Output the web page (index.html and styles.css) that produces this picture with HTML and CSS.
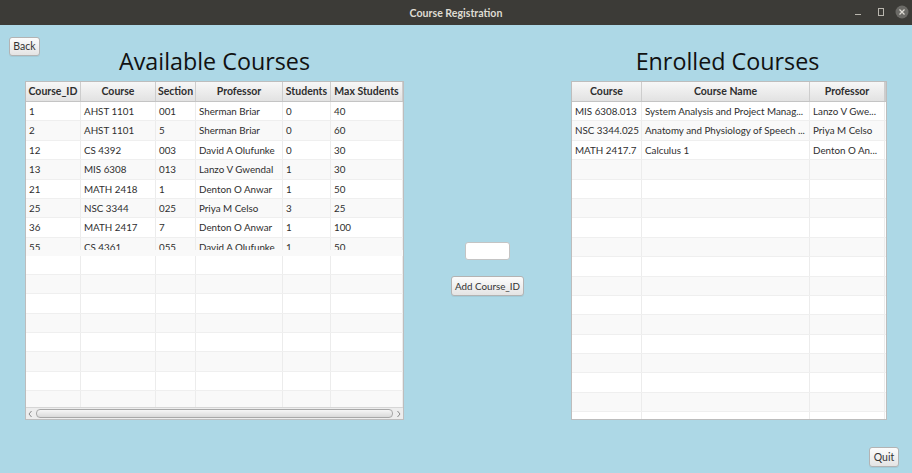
FILE: index.html
```html
<!DOCTYPE html>
<html>
<head>
<meta charset="utf-8">
<title>Course Registration</title>
<link rel="stylesheet" href="styles.css">
</head>
<body>
<header class="titlebar">
  <span></span>
  <span class="title">Course Registration</span>
  <div class="winctl">
    <svg width="60" height="25" viewBox="0 0 60 25">
      <line x1="5" y1="14.5" x2="11" y2="14.5" stroke="#b9b6ae" stroke-width="1"/>
      <rect x="28.5" y="8.5" width="5" height="7" fill="none" stroke="#b9b6ae" stroke-width="1"/>
      <circle cx="52" cy="12" r="6.5" fill="#6b6a66"/>
      <path d="M49.5 9.5 L54.5 14.5 M54.5 9.5 L49.5 14.5" stroke="#e0ddd6" stroke-width="1.2"/>
    </svg>
  </div>
</header>
<main class="app">
  <button class="btn back">Back</button>
  <h1 class="heading h-left">Available Courses</h1>
  <h1 class="heading h-right">Enrolled Courses</h1>

  <section class="tbl avail">
    <div class="row hdr">
      <div class="c">Course_ID</div><div class="c">Course</div><div class="c">Section</div><div class="c">Professor</div><div class="c">Students</div><div class="c">Max Students</div>
    </div>
    <div class="body">
      <div class="clip">
        <div class="row"><div class="c">1</div><div class="c">AHST 1101</div><div class="c">001</div><div class="c">Sherman Briar</div><div class="c">0</div><div class="c">40</div></div>
        <div class="row alt"><div class="c">2</div><div class="c">AHST 1101</div><div class="c">5</div><div class="c">Sherman Briar</div><div class="c">0</div><div class="c">60</div></div>
        <div class="row"><div class="c">12</div><div class="c">CS 4392</div><div class="c">003</div><div class="c">David A Olufunke</div><div class="c">0</div><div class="c">30</div></div>
        <div class="row alt"><div class="c">13</div><div class="c">MIS 6308</div><div class="c">013</div><div class="c">Lanzo V Gwendal</div><div class="c">1</div><div class="c">30</div></div>
        <div class="row"><div class="c">21</div><div class="c">MATH 2418</div><div class="c">1</div><div class="c">Denton O Anwar</div><div class="c">1</div><div class="c">50</div></div>
        <div class="row alt"><div class="c">25</div><div class="c">NSC 3344</div><div class="c">025</div><div class="c">Priya M Celso</div><div class="c">3</div><div class="c">25</div></div>
        <div class="row"><div class="c">36</div><div class="c">MATH 2417</div><div class="c">7</div><div class="c">Denton O Anwar</div><div class="c">1</div><div class="c">100</div></div>
        <div class="row alt cut"><div class="c">55</div><div class="c">CS 4361</div><div class="c">055</div><div class="c">David A Olufunke</div><div class="c">1</div><div class="c">50</div></div>
      </div>
      <div class="row"><div class="c"></div><div class="c"></div><div class="c"></div><div class="c"></div><div class="c"></div><div class="c"></div></div>
      <div class="row alt"><div class="c"></div><div class="c"></div><div class="c"></div><div class="c"></div><div class="c"></div><div class="c"></div></div>
      <div class="row"><div class="c"></div><div class="c"></div><div class="c"></div><div class="c"></div><div class="c"></div><div class="c"></div></div>
      <div class="row alt"><div class="c"></div><div class="c"></div><div class="c"></div><div class="c"></div><div class="c"></div><div class="c"></div></div>
      <div class="row"><div class="c"></div><div class="c"></div><div class="c"></div><div class="c"></div><div class="c"></div><div class="c"></div></div>
      <div class="row alt"><div class="c"></div><div class="c"></div><div class="c"></div><div class="c"></div><div class="c"></div><div class="c"></div></div>
      <div class="row"><div class="c"></div><div class="c"></div><div class="c"></div><div class="c"></div><div class="c"></div><div class="c"></div></div>
      <div class="row alt"><div class="c"></div><div class="c"></div><div class="c"></div><div class="c"></div><div class="c"></div><div class="c"></div></div>
    </div>
    <div class="hscroll">
      <svg class="arrow" width="9" height="12" viewBox="0 0 9 12"><polyline points="5.5,3 3,6 5.5,9" fill="none" stroke="#8a8a8a" stroke-width="1"/></svg>
      <div class="thumb"></div>
      <svg class="arrow" width="9" height="12" viewBox="0 0 9 12"><polyline points="3.5,3 6,6 3.5,9" fill="none" stroke="#8a8a8a" stroke-width="1"/></svg>
    </div>
  </section>

  <div class="middle">
    <input class="field" type="text">
    <button class="btn add">Add Course_ID</button>
  </div>

  <section class="tbl enrolled">
    <div class="row hdr">
      <div class="c">Course</div><div class="c">Course Name</div><div class="c">Professor</div><div class="c"></div>
    </div>
    <div class="body">
      <div class="row"><div class="c">MIS 6308.013</div><div class="c">System Analysis and Project Manag...</div><div class="c">Lanzo V Gwe...</div><div class="c"></div></div>
      <div class="row alt"><div class="c">NSC 3344.025</div><div class="c">Anatomy and Physiology of Speech ...</div><div class="c">Priya M Celso</div><div class="c"></div></div>
      <div class="row"><div class="c">MATH 2417.7</div><div class="c">Calculus 1</div><div class="c">Denton O An...</div><div class="c"></div></div>
      <div class="row alt"><div class="c"></div><div class="c"></div><div class="c"></div><div class="c"></div></div>
      <div class="row"><div class="c"></div><div class="c"></div><div class="c"></div><div class="c"></div></div>
      <div class="row alt"><div class="c"></div><div class="c"></div><div class="c"></div><div class="c"></div></div>
      <div class="row"><div class="c"></div><div class="c"></div><div class="c"></div><div class="c"></div></div>
      <div class="row alt"><div class="c"></div><div class="c"></div><div class="c"></div><div class="c"></div></div>
      <div class="row"><div class="c"></div><div class="c"></div><div class="c"></div><div class="c"></div></div>
      <div class="row alt"><div class="c"></div><div class="c"></div><div class="c"></div><div class="c"></div></div>
      <div class="row"><div class="c"></div><div class="c"></div><div class="c"></div><div class="c"></div></div>
      <div class="row alt"><div class="c"></div><div class="c"></div><div class="c"></div><div class="c"></div></div>
      <div class="row"><div class="c"></div><div class="c"></div><div class="c"></div><div class="c"></div></div>
      <div class="row alt"><div class="c"></div><div class="c"></div><div class="c"></div><div class="c"></div></div>
      <div class="row"><div class="c"></div><div class="c"></div><div class="c"></div><div class="c"></div></div>
      <div class="row alt"><div class="c"></div><div class="c"></div><div class="c"></div><div class="c"></div></div>
      <div class="row"><div class="c"></div><div class="c"></div><div class="c"></div><div class="c"></div></div>
    </div>
  </section>

  <button class="btn quit">Quit</button>
</main>
</body>
</html>
```

FILE: styles.css
```css
html, body {
  margin: 0;
  padding: 0;
}
body {
  width: 912px;
  height: 473px;
  overflow: hidden;
  background: #add8e6;
  font-family: Lato, "Open Sans", sans-serif;
  color: #2e2e2e;
}

.titlebar {
  height: 25px;
  background: #3c3b37;
  display: grid;
  grid-template-columns: 1fr auto 1fr;
  align-items: center;
}
.title {
  color: #dfdbd2;
  font-family: Lato, sans-serif;
  font-weight: bold;
  font-size: 10.6px;
}
.winctl {
  justify-self: end;
  height: 25px;
  margin-right: 2px;
}
.winctl svg { display: block; }

.app {
  display: grid;
  grid-template-columns: 25px 379px 167px 316px 25px;
  grid-template-rows: 56px 339px 53px;
}

.btn {
  box-sizing: border-box;
  padding: 0;
  margin: 0;
  border: 1px solid #b3b3b3;
  border-radius: 3px;
  background: linear-gradient(#fcfcfc, #e4e4e4);
  box-shadow: 0 1px 0 rgba(0, 0, 0, 0.06);
  font-family: Lato, sans-serif;
  font-size: 10.5px;
  color: #333;
  line-height: 17px;
  white-space: nowrap;
}
.back {
  grid-column: 1 / 3;
  grid-row: 1;
  justify-self: start;
  align-self: start;
  margin: 12px 0 0 9px;
  width: 31px;
  height: 19px;
}
.heading {
  margin: 0 0 6px;
  grid-row: 1;
  align-self: end;
  text-align: center;
  font-family: "Open Sans", sans-serif;
  font-weight: normal;
  font-size: 23.3px;
  line-height: 28px;
  color: #111;
}
.h-left { grid-column: 2; }
.h-right { grid-column: 4; padding-right: 3px; }

.tbl {
  grid-row: 2;
  background: #fff;
  border: 1px solid #bdbdbd;
  display: flex;
  flex-direction: column;
  overflow: hidden;
  font-size: 9.8px;
}
.avail {
  grid-column: 2;
  --cols: 55px 75px 40px 87px 48px 72px;
}
.enrolled {
  grid-column: 4;
  --cols: 70px 168px 75px 1px;
}

.row {
  display: grid;
  grid-template-columns: var(--cols);
  height: 19.4px;
  flex: none;
  box-sizing: border-box;
  border-bottom: 1px solid #efefef;
  background: #fff;
}
.row.alt { background: #f9f9f9; }
.c {
  box-sizing: border-box;
  border-right: 1px solid #ececec;
  padding: 0 3px;
  white-space: nowrap;
  overflow: hidden;
  line-height: 18.4px;
}

.hdr {
  height: 20px;
  background: linear-gradient(#f7f7f7, #e2e2e2);
  border-bottom: 1px solid #c4c4c4;
  font-weight: bold;
  font-size: 10.5px;
}
.hdr .c {
  text-align: center;
  border-right: 1px solid #cdcdcd;
  line-height: 19px;
  padding: 0;
}

.body {
  flex: 1;
  overflow: hidden;
  display: flex;
  flex-direction: column;
}
.avail .body {
  flex: none;
  height: 305px;
}
.clip {
  flex: none;
  height: 153.5px;
  overflow: hidden;
  background: #f9f9f9;
}
.row.cut {
  height: 12.5px;
  border-bottom: 0;
}

.hscroll {
  flex: none;
  height: 12px;
  border-top: 1px solid #d6d6d6;
  box-sizing: border-box;
  background: #ededed;
  display: flex;
  align-items: center;
}
.arrow { flex: none; display: block; }
.thumb {
  flex: 1;
  height: 9px;
  margin: 0 1px;
  box-sizing: border-box;
  border: 1px solid #a8a8a8;
  border-radius: 4px;
  background: linear-gradient(#f6f6f6, #dadada);
}

.middle {
  grid-column: 3;
  grid-row: 2;
  display: flex;
  flex-direction: column;
  align-items: center;
  padding-top: 161px;
  gap: 16px;
}
.field {
  box-sizing: border-box;
  width: 45px;
  height: 18px;
  margin: 0;
  padding: 0;
  border: 1px solid #c4c4c4;
  border-radius: 3px;
  background: #fff;
  outline: none;
}
.add {
  width: 73px;
  height: 20px;
  line-height: 18px;
  font-size: 9.8px;
}

.quit {
  grid-column: 1 / -1;
  grid-row: 3;
  justify-self: end;
  align-self: start;
  margin: 27px 13px 0 0;
  width: 30px;
  height: 20px;
  line-height: 18px;
}
```
